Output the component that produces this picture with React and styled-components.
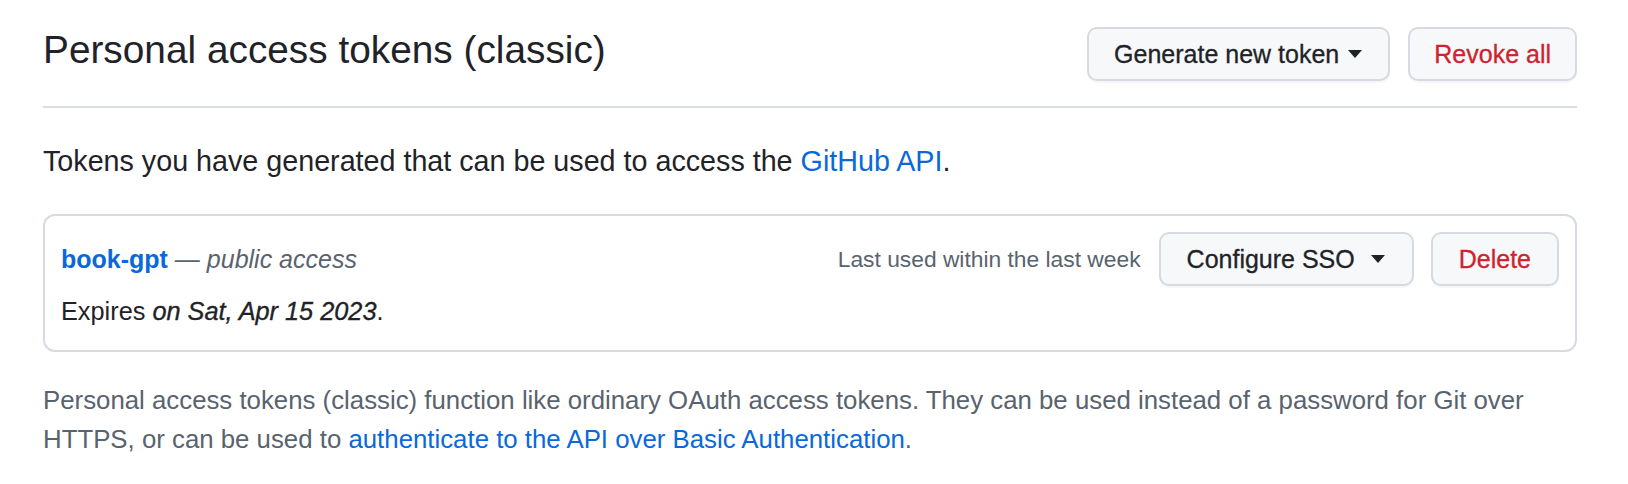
import React from "react";
import styled, { createGlobalStyle } from "styled-components";

const GlobalStyle = createGlobalStyle`
  * { box-sizing: border-box; }
  html, body { margin: 0; padding: 0; background: #ffffff; }
  body {
    font-family: "Liberation Sans", Arial, sans-serif;
    color: #1f2328;
    -webkit-font-smoothing: antialiased;
  }
`;

const Page = styled.main`
  padding: 0 51px 0 43px;
`;

const Header = styled.header`
  display: flex;
  justify-content: space-between;
  align-items: flex-start;
  padding-top: 26px;
  border-bottom: 2px solid #d8dee4;
`;

const Title = styled.h2`
  margin: 0;
  font-size: 38.8px;
  line-height: 48px;
  font-weight: 400;
  color: #1f2328;
`;

const Actions = styled.div`
  display: flex;
  gap: 18px;
  margin: 1px 0 25px;
`;

const Button = styled.button`
  display: inline-flex;
  align-items: center;
  height: 54px;
  padding: 0 ${(p) => p.$padRight || 25}px 0 ${(p) => p.$padLeft || 25}px;
  font-family: inherit;
  font-size: 25px;
  font-weight: 500;
  -webkit-text-stroke: 0.3px currentColor;
  color: ${(p) => (p.$danger ? "#cf222e" : "#1f2328")};
  background: #f6f8fa;
  border: 2px solid #d5dbe1;
  border-radius: 10px;
  box-shadow: 0 2px 0 rgba(31, 35, 40, 0.04);
  white-space: nowrap;
  cursor: pointer;
`;

const Caret = styled.span`
  display: inline-block;
  width: 0;
  height: 0;
  margin-left: ${(p) => p.$gap || 9}px;
  border-top: 8px solid currentColor;
  border-left: 7px solid transparent;
  border-right: 7px solid transparent;
`;

const Intro = styled.p`
  margin: 32px 0 0;
  font-size: 28.7px;
  line-height: 42px;
  color: #1f2328;
`;

const Link = styled.a`
  color: #0969da;
  text-decoration: none;
`;

const TokenBox = styled.div`
  margin-top: 32px;
  border: 2px solid #d5dbe1;
  border-radius: 12px;
  padding: 16px 16px 21px;
`;

const TokenHead = styled.div`
  display: flex;
  align-items: center;
  justify-content: space-between;
  height: 54px;
`;

const TokenName = styled.div`
  font-size: 25px;
  line-height: 36px;
  color: #59636e;
`;

const TokenLink = styled.a`
  color: #0969da;
  font-weight: 700;
  text-decoration: none;
`;

const Access = styled.em`
  font-style: italic;
`;

const TokenMeta = styled.div`
  display: flex;
  align-items: center;
  gap: 17px;
`;

const LastUsed = styled.span`
  font-size: 22.8px;
  color: #59636e;
  margin-right: 1px;
`;

const Expiry = styled.p`
  margin: 7px 0 0;
  font-size: 25.3px;
  line-height: 36px;
  color: #1f2328;

  em {
    font-style: italic;
    -webkit-text-stroke: 0.35px currentColor;
  }
`;

const Note = styled.p`
  margin: 29px 0 0;
  font-size: 25.8px;
  line-height: 39px;
  color: #59636e;
`;

export default function App() {
  return (
    <>
      <GlobalStyle />
      <Page>
        <Header>
          <Title>Personal access tokens (classic)</Title>
          <Actions>
            <Button $padRight={26}>
              Generate new token
              <Caret $gap={9} />
            </Button>
            <Button $danger $padLeft={24} $padRight={24}>Revoke all</Button>
          </Actions>
        </Header>

        <Intro>
          Tokens you have generated that can be used to access the{" "}
          <Link href="#">GitHub API</Link>.
        </Intro>

        <TokenBox>
          <TokenHead>
            <TokenName>
              <TokenLink href="#">book-gpt</TokenLink> — <Access>public access</Access>
            </TokenName>
            <TokenMeta>
              <LastUsed>Last used within the last week</LastUsed>
              <Button $padLeft={26} $padRight={27}>
                Configure SSO
                <Caret $gap={16} />
              </Button>
              <Button $danger $padLeft={26} $padRight={26}>Delete</Button>
            </TokenMeta>
          </TokenHead>
          <Expiry>
            Expires <em>on Sat, Apr 15 2023</em>.
          </Expiry>
        </TokenBox>

        <Note>
          Personal access tokens (classic) function like ordinary OAuth access tokens. They can be used
          instead of a password for Git over HTTPS, or can be used to{" "}
          <Link href="#">authenticate to the API over Basic Authentication</Link>.
        </Note>
      </Page>
    </>
  );
}
